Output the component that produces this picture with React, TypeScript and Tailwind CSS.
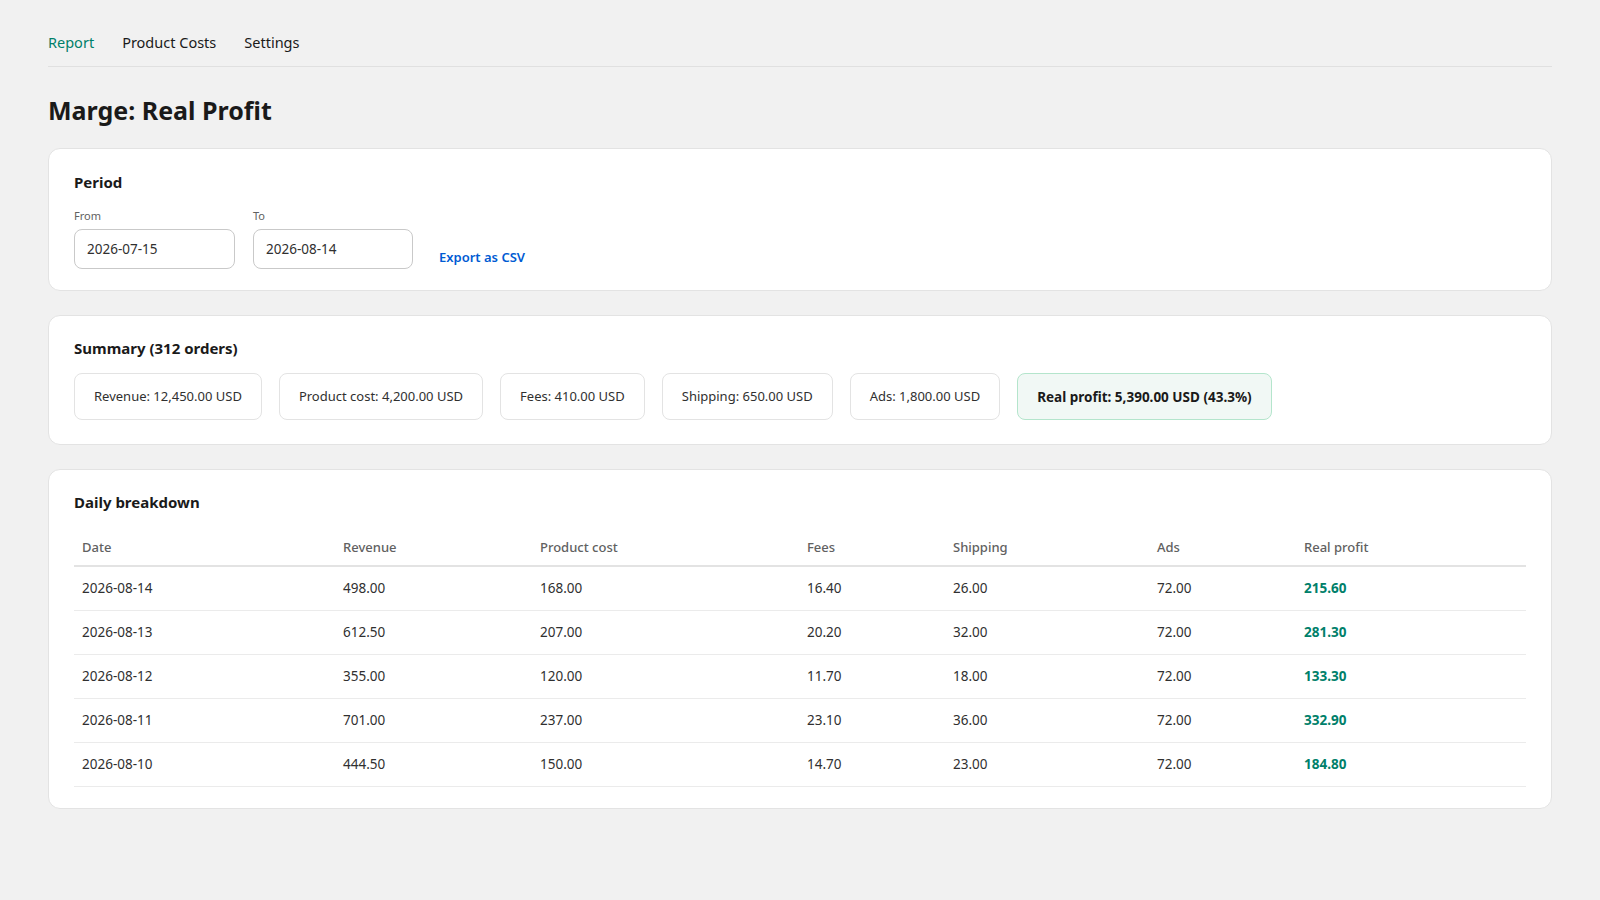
import React from "react";

const rows = [
  ["2026-08-14", "498.00", "168.00", "16.40", "26.00", "72.00", "215.60"],
  ["2026-08-13", "612.50", "207.00", "20.20", "32.00", "72.00", "281.30"],
  ["2026-08-12", "355.00", "120.00", "11.70", "18.00", "72.00", "133.30"],
  ["2026-08-11", "701.00", "237.00", "23.10", "36.00", "72.00", "332.90"],
  ["2026-08-10", "444.50", "150.00", "14.70", "23.00", "72.00", "184.80"],
];

const chips = [
  "Revenue: 12,450.00 USD",
  "Product cost: 4,200.00 USD",
  "Fees: 410.00 USD",
  "Shipping: 650.00 USD",
  "Ads: 1,800.00 USD",
];

export default function App() {
  return (
    <div
      className="min-h-screen bg-[#f1f1f1] text-[#303030] px-12 pt-[32px] pb-12"
      style={{ fontFamily: '"Noto Sans", "Open Sans", sans-serif' }}
    >
      <nav className="flex items-center gap-[28px] border-b border-[#e0e0e0] pb-[12px] text-[14.5px]">
        <span className="text-[#00806a]">Report</span>
        <span className="text-[#1a1a1a]">Product Costs</span>
        <span className="text-[#1a1a1a]">Settings</span>
      </nav>

      <h1 className="mt-[26px] text-[25px] font-bold text-[#1a1a1a] leading-[34px]">Marge: Real Profit</h1>

      <section className="mt-[21px] rounded-xl border border-[#e3e3e3] bg-white px-[25px] pt-[22px] pb-[21px]">
        <h2 className="text-[15px] font-bold text-[#1a1a1a]">Period</h2>
        <div className="mt-[15px] flex items-end gap-[18px]">
          <div className="flex flex-col">
            <label className="text-[11px] text-[#616161] mb-[4px]">From</label>
            <div className="w-[161px] h-[40px] rounded-lg border border-[#c9c9c9] px-3 flex items-center text-[13.5px]">2026-07-15</div>
          </div>
          <div className="flex flex-col">
            <label className="text-[11px] text-[#616161] mb-[4px]">To</label>
            <div className="w-[160px] h-[40px] rounded-lg border border-[#c9c9c9] px-3 flex items-center text-[13.5px]">2026-08-14</div>
          </div>
          <a className="ml-2 mb-[1px] text-[13px] font-semibold text-[#005bd3]">Export as CSV</a>
        </div>
      </section>

      <section className="mt-[24px] rounded-xl border border-[#e3e3e3] bg-white px-[25px] pt-[21px] pb-[24px]">
        <h2 className="text-[15px] font-bold text-[#1a1a1a]">Summary (312 orders)</h2>
        <div className="mt-[14px] flex gap-[17px]">
          {chips.map((c) => (
            <div key={c} className="h-[47px] rounded-lg border border-[#e3e3e3] px-[19px] flex items-center text-[13px]">
              {c}
            </div>
          ))}
          <div className="h-[47px] rounded-lg border border-[#b4e5cc] bg-[#f1f8f5] px-[19px] flex items-center text-[13.5px] font-bold text-[#1a1a1a]">
            Real profit: 5,390.00 USD (43.3%)
          </div>
        </div>
      </section>

      <section className="mt-[24px] rounded-xl border border-[#e3e3e3] bg-white px-[25px] pt-[21px] pb-[21px]">
        <h2 className="text-[15px] font-bold text-[#1a1a1a]">Daily breakdown</h2>
        <table className="mt-[24px] w-full table-fixed border-collapse text-[13.5px]">
          <thead>
            <tr className="border-b-2 border-[#e3e3e3] text-left text-[#616161] text-[13px]">
              <th className="w-[261px] px-2 pb-[8px] font-medium">Date</th>
              <th className="w-[197px] px-2 pb-[8px] font-medium">Revenue</th>
              <th className="w-[267px] px-2 pb-[8px] font-medium">Product cost</th>
              <th className="w-[146px] px-2 pb-[8px] font-medium">Fees</th>
              <th className="w-[204px] px-2 pb-[8px] font-medium">Shipping</th>
              <th className="w-[147px] px-2 pb-[8px] font-medium">Ads</th>
              <th className="px-2 pb-[8px] font-medium">Real profit</th>
            </tr>
          </thead>
          <tbody>
            {rows.map((r) => (
              <tr key={r[0]} className="border-b border-[#ebebeb] h-[44px]">
                {r.slice(0, 6).map((v, i) => (
                  <td key={i} className="px-2">{v}</td>
                ))}
                <td className="px-2 font-bold text-[#00806a]">{r[6]}</td>
              </tr>
            ))}
          </tbody>
        </table>
      </section>
    </div>
  );
}
